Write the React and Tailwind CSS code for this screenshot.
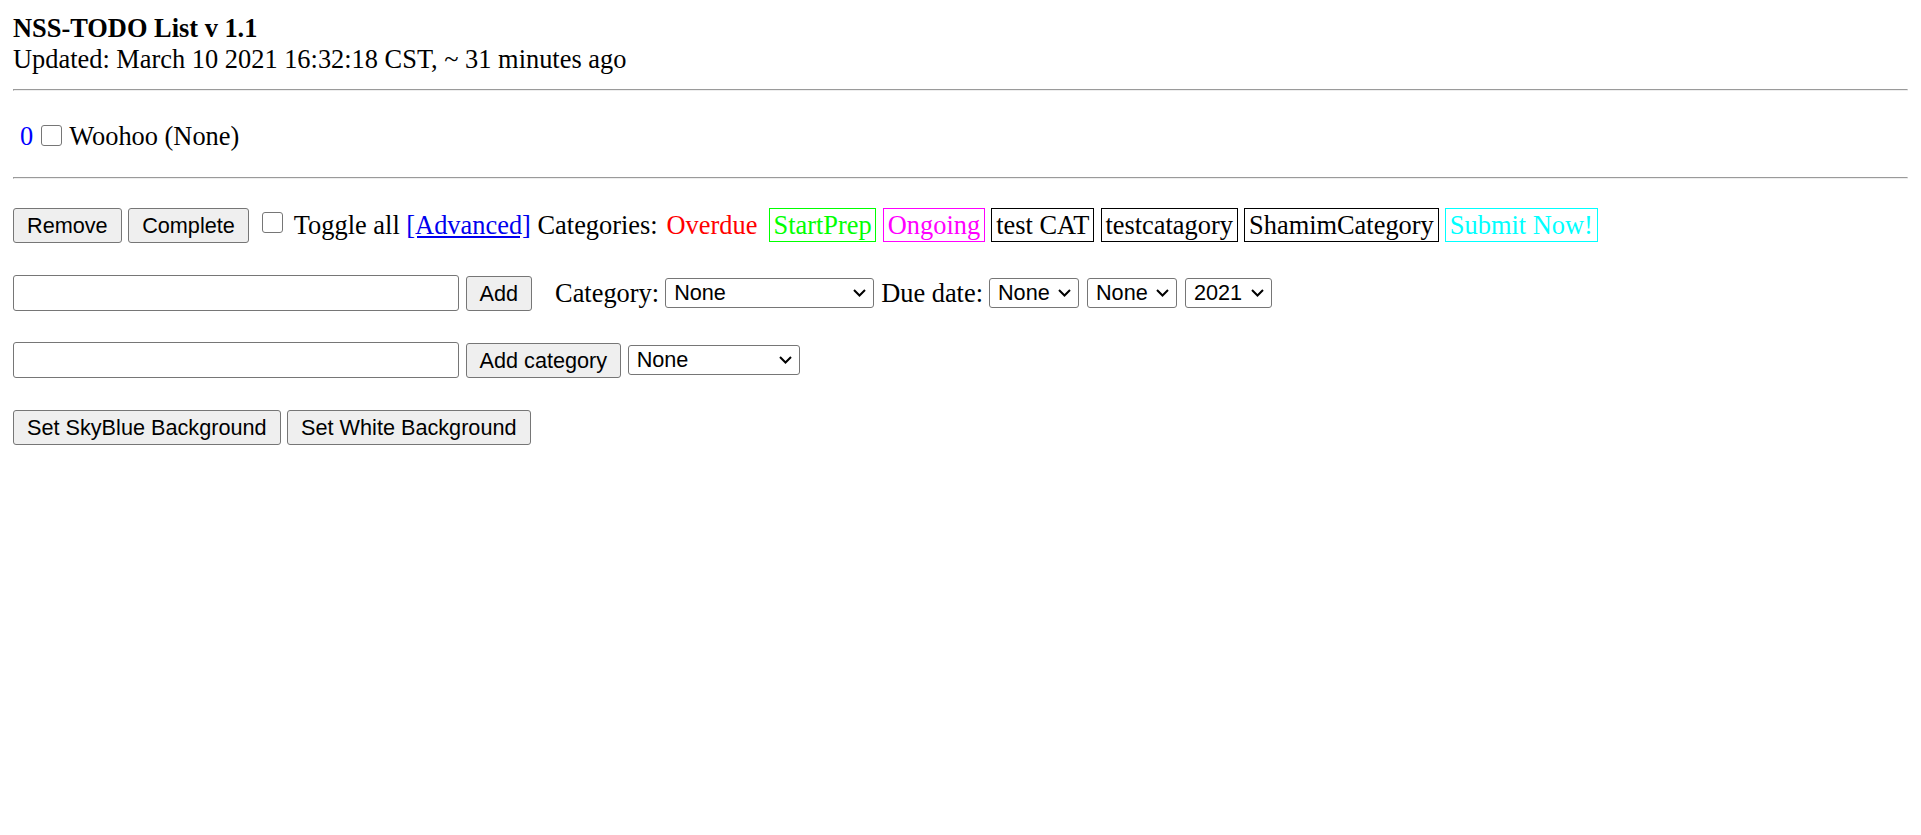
import React from "react";

const serif = "font-['Liberation_Serif','Times_New_Roman',serif]";
const sans = "font-['Liberation_Sans',Arial,sans-serif]";

function Btn({ children, className = "" }) {
    return (
        <button
            className={`${sans} h-[35px] px-[13px] text-[21.67px] leading-[25px] text-black bg-[#efefef] border border-[#767676] rounded-[3px] shrink-0 ${className}`}
        >
            {children}
        </button>
    );
}

function Box({ children, color = "border-black text-black", className = "ml-[6.5px]" }) {
    return (
        <span className={`h-[34px] px-[3.8px] border leading-[32px] whitespace-nowrap ${color} ${className}`}>
            {children}
        </span>
    );
}

function Check({ className = "" }) {
    return (
        <input
            type="checkbox"
            className={`appearance-none block w-[21px] h-[21px] bg-white border border-[#767676] rounded-[3px] shrink-0 ${className}`}
        />
    );
}

function Select({ value, width, className = "" }) {
    return (
        <div className={`relative h-[30px] shrink-0 ${className}`} style={{ width }}>
            <select
                className={`${sans} appearance-none block w-full h-full pl-[8px] pr-[24px] text-[21.67px] leading-[28px] text-black bg-white border border-[#767676] rounded-[3px]`}
                defaultValue={value}
            >
                <option>{value}</option>
            </select>
            {/* chevron */}
            <svg className="absolute right-[8px] top-[11px] pointer-events-none" width="13" height="8" viewBox="0 0 13 8">
                <path d="M1 1 L6.5 6.5 L12 1" fill="none" stroke="#000" strokeWidth="2" />
            </svg>
        </div>
    );
}

function TextInput() {
    return (
        <input
            type="text"
            className={`${sans} block w-[446px] h-[36px] px-[4px] text-[21.67px] bg-white border border-[#767676] rounded-[3px] shrink-0`}
        />
    );
}

function Rule({ className = "" }) {
    return <div className={`h-0 border-t border-b border-l border-r border-t-[#9a9a9a] border-l-[#9a9a9a] border-b-[#eeeeee] border-r-[#eeeeee] ${className}`} />;
}

export default function App() {
    return (
        <div className={`${serif} min-h-[835px] bg-white text-black text-[26.4px] px-[13px] pt-[13px]`}>
            {/* Header */}
            <div className="leading-[31px]">
                <b>NSS-TODO List v 1.1</b>
                <br />
                Updated: March 10 2021 16:32:18 CST, ~ 31 minutes ago
            </div>

            <Rule className="mt-[14px]" />

            {/* Todo list */}
            <div className="mt-[30px] h-[30px] leading-[30px] flex items-start">
                <span className="ml-[7px] text-[#0000ff]">0</span>
                <Check className="ml-[8px] mt-[4px] w-[20px] h-[20px]" />
                <span className="ml-[7px]">Woohoo (None)</span>
            </div>

            <Rule className="mt-[26px]" />

            {/* Actions + categories */}
            <div className="mt-[28px] h-[36px] flex items-center leading-[30px] whitespace-nowrap">
                <Btn>Remove</Btn>
                <Btn className="ml-[6.5px]">Complete</Btn>
                <Check className="ml-[13px] mb-[5px]" />
                <span className="ml-[11px]">
                    Toggle all{" "}
                    <a href="#" className="text-[#0000ee] underline">[Advanced]</a>{" "}
                    Categories:
                </span>
                <Box color="border-transparent text-[#ff0000]" className="ml-[4px]">Overdue</Box>
                <Box color="border-[#00ff00] text-[#00ff00]">StartPrep</Box>
                <Box color="border-[#ff00ff] text-[#ff00ff]">Ongoing</Box>
                <Box>test CAT</Box>
                <Box>testcatagory</Box>
                <Box>ShamimCategory</Box>
                <Box color="border-[#00ffff] text-[#00ffff]">Submit Now!</Box>
            </div>

            {/* Add todo */}
            <div className="mt-[32px] h-[36px] flex items-center leading-[30px] whitespace-nowrap">
                <TextInput />
                <Btn className="ml-[6.5px]">Add</Btn>
                <span className="ml-[23px]">Category:</span>
                <Select value="None" width="209px" className="ml-[6px]" />
                <span className="ml-[7px]">Due date:</span>
                <Select value="None" width="90px" className="ml-[6px]" />
                <Select value="None" width="90px" className="ml-[8px]" />
                <Select value="2021" width="87px" className="ml-[8px]" />
            </div>

            {/* Add category */}
            <div className="mt-[31px] h-[36px] flex items-center leading-[30px] whitespace-nowrap">
                <TextInput />
                <Btn className="ml-[6.5px]">Add category</Btn>
                <Select value="None" width="172px" className="ml-[6.5px]" />
            </div>

            {/* Background */}
            <div className="mt-[31px] h-[36px] flex items-center leading-[30px] whitespace-nowrap">
                <Btn>Set SkyBlue Background</Btn>
                <Btn className="ml-[6.5px]">Set White Background</Btn>
            </div>
        </div>
    );
}
